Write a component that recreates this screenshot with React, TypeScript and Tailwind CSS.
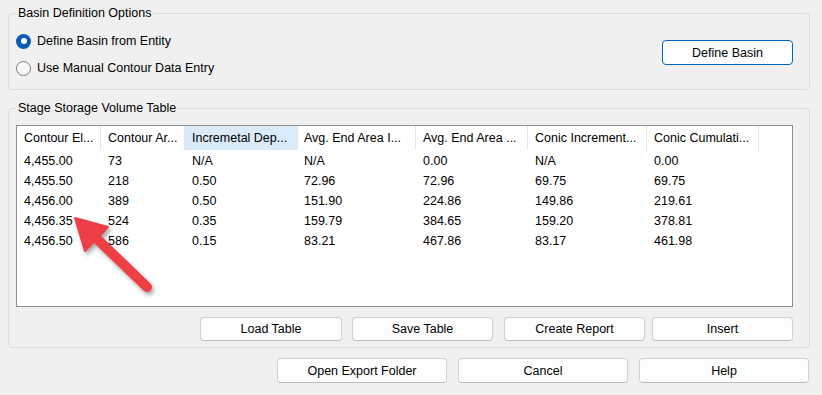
import React from "react";

const cols = [
  { w: 84, pl: 7, h: "Contour El..." },
  { w: 84, pl: 7, h: "Contour Ar..." },
  { w: 113, pl: 7, h: "Incremetal Dep...", hi: true },
  { w: 118, pl: 6, h: "Avg. End Area I..." },
  { w: 112, pl: 7, h: "Avg. End Area ..." },
  { w: 119, pl: 7, h: "Conic Increment..." },
  { w: 112, pl: 7, h: "Conic Cumulati..." },
];

const rows = [
  ["4,455.00", "73", "N/A", "N/A", "0.00", "N/A", "0.00"],
  ["4,455.50", "218", "0.50", "72.96", "72.96", "69.75", "69.75"],
  ["4,456.00", "389", "0.50", "151.90", "224.86", "149.86", "219.61"],
  ["4,456.35", "524", "0.35", "159.79", "384.65", "159.20", "378.81"],
  ["4,456.50", "586", "0.15", "83.21", "467.86", "83.17", "461.98"],
];

function Btn({ children, className = "" }: { children: React.ReactNode; className?: string }) {
  return (
    <button
      className={
        "flex items-center justify-center bg-[#fdfdfd] border border-[#d0d0d0] border-b-[#bcbcbc] rounded-[4px] text-black " +
        className
      }
    >
      {children}
    </button>
  );
}

function Radio({ checked, label, className = "" }: { checked?: boolean; label: string; className?: string }) {
  return (
    <div className={"flex items-center h-[20px] " + className}>
      {checked ? (
        <span className="w-[15px] h-[15px] rounded-full bg-[#0a5cb0] flex items-center justify-center">
          <span className="w-[6px] h-[6px] rounded-full bg-white" />
        </span>
      ) : (
        <span className="w-[15px] h-[15px] rounded-full border border-[#7a7a7a] bg-[#f8f8f8]" />
      )}
      <span className="ml-[6px]">{label}</span>
    </div>
  );
}

export default function App() {
  return (
    <div
      className="relative w-[822px] h-[395px] overflow-hidden bg-[#f0f0f0] text-black text-[12.5px] leading-[16px] pl-[8px] pt-[5px]"
      style={{ fontFamily: '"Liberation Sans", Arial, sans-serif' }}
    >
      {/* Group 1 */}
      <fieldset className="w-[802px] border border-[#dcdcdc] rounded-[4px] pl-[7px] pr-[16px] pt-[10px] pb-[11px]">
        <legend className="px-[2px] leading-[16px]">Basin Definition Options</legend>
        <div className="flex items-start justify-between">
          <div className="flex flex-col">
            <Radio checked label="Define Basin from Entity" />
            <Radio label="Use Manual Contour Data Entry" className="mt-[7px]" />
          </div>
          <button className="mt-[9px] w-[131px] h-[25px] bg-[#fdfdfd] border border-[#0067c0] rounded-[4px] flex items-center justify-center text-black">
            Define Basin
          </button>
        </div>
      </fieldset>

      {/* Group 2 */}
      <fieldset className="mt-[10px] w-[802px] border border-[#dcdcdc] rounded-[4px] pl-[7px] pr-[16px] pt-[9px] pb-[6px]">
        <legend className="px-[2px] leading-[16px]">Stage Storage Volume Table</legend>
        <div className="h-[182px] border border-[#8f8f8f] bg-white">
          <div className="flex h-[24px]">
            {cols.map((c, i) => (
              <div
                key={i}
                className={
                  "flex items-center border-r border-[#e5e5e5] whitespace-nowrap overflow-hidden " +
                  (c.hi ? "bg-[#d9ebf9]" : "")
                }
                style={{ width: c.w, paddingLeft: c.pl }}
              >
                {c.h}
              </div>
            ))}
          </div>
          <div className="pt-[1px]">
            {rows.map((r, ri) => (
              <div key={ri} className="flex h-[20px] items-center">
                {r.map((v, ci) => (
                  <div
                    key={ci}
                    className="whitespace-nowrap"
                    style={{ width: cols[ci].w, paddingLeft: cols[ci].pl }}
                  >
                    {v}
                  </div>
                ))}
              </div>
            ))}
          </div>
        </div>
        <div className="flex justify-end mt-[10px]">
          <Btn className="w-[142px] h-[24px]">Load Table</Btn>
          <Btn className="ml-[10px] w-[141px] h-[24px]">Save Table</Btn>
          <Btn className="ml-[11px] w-[141px] h-[24px]">Create Report</Btn>
          <Btn className="ml-[7px] w-[141px] h-[24px]">Insert</Btn>
        </div>
      </fieldset>

      {/* Bottom buttons */}
      <div className="flex justify-end gap-[11px] w-[801px] mt-[10px]">
        <Btn className="w-[170px] h-[25px]">Open Export Folder</Btn>
        <Btn className="w-[170px] h-[25px]">Cancel</Btn>
        <Btn className="w-[170px] h-[25px]">Help</Btn>
      </div>

      {/* Annotation arrow */}
      <svg
        className="absolute left-0 top-0 pointer-events-none drop-shadow-[2px_3px_2px_rgba(0,0,0,0.35)]"
        width="822"
        height="395"
        viewBox="0 0 822 395"
      >
        <line x1="94" y1="236" x2="147" y2="287" stroke="#ee3e46" strokeWidth="10" strokeLinecap="round" />
        <polygon points="75,218 85,251 108,227" fill="#ee3e46" stroke="#ee3e46" strokeWidth="2" strokeLinejoin="round" />
      </svg>
    </div>
  );
}
